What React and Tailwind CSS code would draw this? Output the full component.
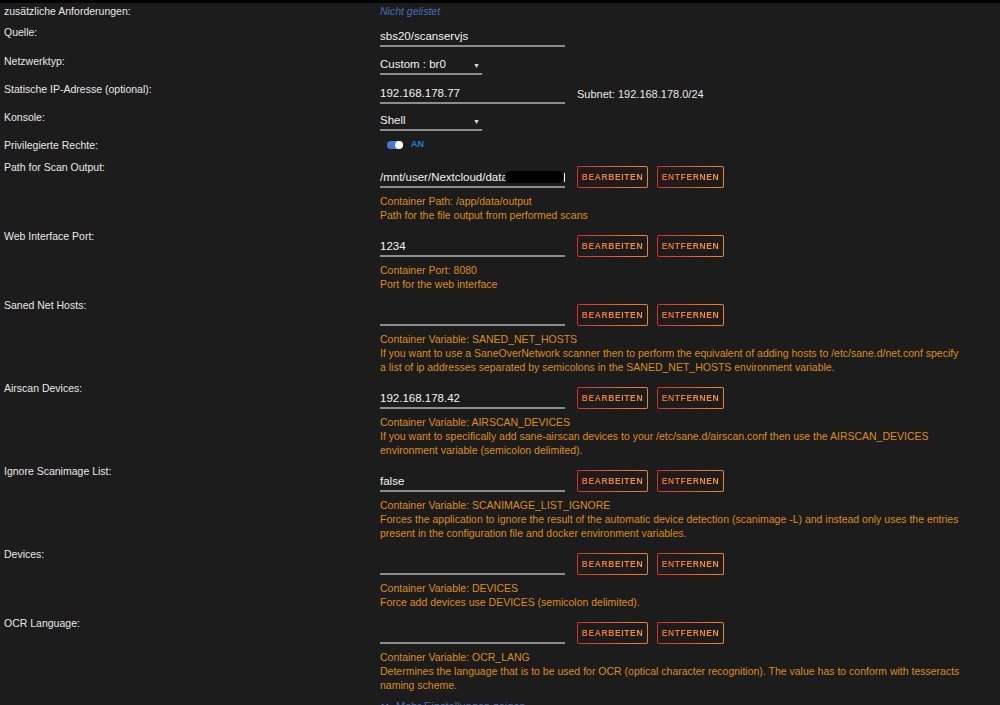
import React from 'react';

// --- KNÖPFE (Rahmen mit Verlauf rot -> orange) ---
const Btn = ({ children, w }) => (
  <div className={`rounded-[2px] bg-linear-to-r from-[#d92a2a] to-[#f0832e] p-px ${w}`}>
    <div className="flex h-[20px] items-center justify-center rounded-[1px] bg-[#1c1c1c]">
      <span className="bg-linear-to-r from-[#ea6a2c] to-[#ff9632] bg-clip-text text-[8.5px] font-bold tracking-[0.6px] text-transparent">
        {children}
      </span>
    </div>
  </div>
);

const Field = ({ value, w = 'w-[185px]', h = 'h-[22px]', children }) => (
  <div className={`relative flex items-center border-b-2 border-[#8c8c8c] pt-[3px] text-[11.5px] text-[#f2f2f2] ${w} ${h}`}>
    {value}
    {children}
  </div>
);

const Select = ({ value }) => (
  <Field value={value} w="w-[102px]" h="h-[21px]">
    <span className="absolute right-[2px] top-[7px] text-[7px] text-[#dddddd]">▼</span>
  </Field>
);

const configs = [
  {
    label: 'Path for Scan Output:',
    value: '/mnt/user/Nextcloud/data,',
    redacted: true,
    lines: ['Container Path: /app/data/output', 'Path for the file output from performed scans'],
  },
  {
    label: 'Web Interface Port:',
    value: '1234',
    lines: ['Container Port: 8080', 'Port for the web interface'],
  },
  {
    label: 'Saned Net Hosts:',
    value: '',
    lines: [
      'Container Variable: SANED_NET_HOSTS',
      'If you want to use a SaneOverNetwork scanner then to perform the equivalent of adding hosts to /etc/sane.d/net.conf specify',
      'a list of ip addresses separated by semicolons in the SANED_NET_HOSTS environment variable.',
    ],
  },
  {
    label: 'Airscan Devices:',
    value: '192.168.178.42',
    lines: [
      'Container Variable: AIRSCAN_DEVICES',
      'If you want to specifically add sane-airscan devices to your /etc/sane.d/airscan.conf then use the AIRSCAN_DEVICES',
      'environment variable (semicolon delimited).',
    ],
  },
  {
    label: 'Ignore Scanimage List:',
    value: 'false',
    lines: [
      'Container Variable: SCANIMAGE_LIST_IGNORE',
      'Forces the application to ignore the result of the automatic device detection (scanimage -L) and instead only uses the entries',
      'present in the configuration file and docker environment variables.',
    ],
  },
  {
    label: 'Devices:',
    value: '',
    lines: ['Container Variable: DEVICES', 'Force add devices use DEVICES (semicolon delimited).'],
  },
  {
    label: 'OCR Language:',
    value: '',
    lines: [
      'Container Variable: OCR_LANG',
      'Determines the language that is to be used for OCR (optical character recognition). The value has to conform with tesseracts',
      'naming scheme.',
    ],
  },
];

const Row = ({ label, h, children }) => (
  <div className={`flex ${h}`}>
    <div className="w-[380px] shrink-0 pl-[4px] leading-[14px]">{label}</div>
    <div>{children}</div>
  </div>
);

export default function App() {
  return (
    <div className="h-[705px] overflow-hidden bg-[#1c1c1c] font-['Liberation_Sans',Arial,sans-serif] text-[10.5px] text-[#e8e8e8]">
      <div className="h-[3px] bg-black" />

      {/* EINFACHE ZEILEN */}
      <div className="pt-px">
        <Row label="zusätzliche Anforderungen:" h="h-[21px]">
          <span className="italic leading-[14px] text-[#4a6fb5]">Nicht gelistet</span>
        </Row>
        <Row label="Quelle:" h="h-[29px]">
          <Field value="sbs20/scanservjs" />
        </Row>
        <Row label="Netzwerktyp:" h="h-[28px]">
          <Select value="Custom : br0" />
        </Row>
        <Row label="Statische IP-Adresse (optional):" h="h-[28px]">
          <div className="flex items-center gap-[12px]">
            <Field value="192.168.178.77" />
            <span className="pt-[3px] text-[11px] text-[#e8e8e8]">Subnet: 192.168.178.0/24</span>
          </div>
        </Row>
        <Row label="Konsole:" h="h-[28px]">
          <Select value="Shell" />
        </Row>
        <Row label="Privilegierte Rechte:" h="h-[22px]">
          <div className="flex h-[14px] items-center pl-[7px]">
            <div className="flex h-[8px] w-[16px] items-center justify-end rounded-full bg-[#4a78d0]">
              <div className="h-[8px] w-[8px] rounded-full bg-white" />
            </div>
            <span className="ml-[8px] text-[9px] font-bold text-[#1f7fc9]">AN</span>
          </div>
        </Row>
      </div>

      {/* CONTAINER-EINSTELLUNGEN */}
      {configs.map((c) => (
        <div key={c.label} className="flex pb-[7px]">
          <div className="w-[380px] shrink-0 pl-[4px] leading-[14px]">{c.label}</div>
          <div className="pt-[6px]">
            <div className="flex items-center">
              <Field value={c.value}>
                {c.redacted && (
                  <>
                    <div className="absolute left-[125px] top-[5px] h-[12px] w-[58px] rounded-[5px] bg-black" />
                    <div className="absolute left-[184px] top-[7px] h-[9px] w-px bg-[#f2f2f2]" />
                  </>
                )}
              </Field>
              <div className="ml-[12px] flex gap-[9px]">
                <Btn w="w-[71px]">BEARBEITEN</Btn>
                <Btn w="w-[67px]">ENTFERNEN</Btn>
              </div>
            </div>
            <div className="mt-[6px] leading-[14px] text-[#dd8d16]">
              {c.lines.map((l) => (
                <div key={l} className="whitespace-nowrap">{l}</div>
              ))}
            </div>
          </div>
        </div>
      ))}

      <div className="flex items-center gap-[6px] pl-[380px] text-[11px] leading-[14px] text-[#486fb8]">
        <svg width="10" height="10" viewBox="0 0 10 10" fill="none" stroke="currentColor" strokeWidth="1.5">
          <path d="M2 3l3 3 3-3" />
        </svg>
        <span>Mehr Einstellungen zeigen ...</span>
      </div>
    </div>
  );
}
